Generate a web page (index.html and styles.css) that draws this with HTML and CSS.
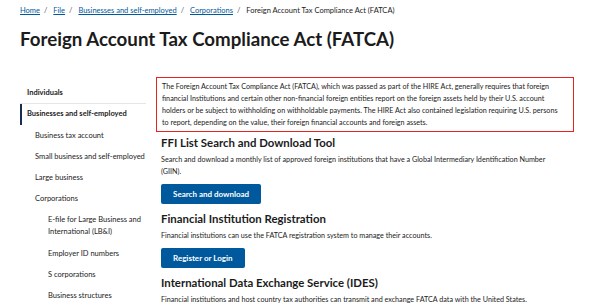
FILE: index.html
```html
<!DOCTYPE html>
<html>
  <head>
    <meta charset="UTF-8" />
    <title>Foreign Account Tax Compliance Act (FATCA)</title>
    <link rel="stylesheet" href="styles.css">
  </head>
  <body>
    <nav class="breadcrumb">
      <a href="#">Home</a><span class="sep">/</span>
      <a href="#">File</a><span class="sep">/</span>
      <a href="#">Businesses and self-employed</a><span class="sep">/</span>
      <a href="#">Corporations</a><span class="sep">/</span>
      <span class="current">Foreign Account Tax Compliance Act (FATCA)</span>
    </nav>
    <h1 class="page-title">Foreign Account Tax Compliance Act (FATCA)</h1>
    <div class="layout">
      <aside class="sidenav">
        <a class="nav-top" href="#">Individuals</a>
        <a class="nav-top active" href="#">Businesses and self-employed</a>
        <a class="nav-sub" href="#">Business tax account</a>
        <a class="nav-sub" href="#">Small business and self-employed</a>
        <a class="nav-sub" href="#">Large business</a>
        <a class="nav-sub" href="#">Corporations</a>
        <a class="nav-subsub" href="#">E-file for Large Business and International (LB&amp;I)</a>
        <a class="nav-subsub" href="#">Employer ID numbers</a>
        <a class="nav-subsub" href="#">S corporations</a>
        <a class="nav-subsub" href="#">Business structures</a>
      </aside>
      <main class="content">
        <p class="intro">The Foreign Account Tax Compliance Act (FATCA), which was passed as part of the HIRE Act, generally requires that foreign financial Institutions and certain other non-financial foreign entities report on the foreign assets held by their U.S. account holders or be subject to withholding on withholdable payments. The HIRE Act also contained legislation requiring U.S. persons to report, depending on the value, their foreign financial accounts and foreign assets.</p>

        <h2>FFI List Search and Download Tool</h2>
        <p>Search and download a monthly list of approved foreign institutions that have a Global Intermediary Identification Number (GIIN).</p>
        <a class="btn" href="#">Search and download</a>

        <h2>Financial Institution Registration</h2>
        <p>Financial institutions can use the FATCA registration system to manage their accounts.</p>
        <a class="btn" href="#">Register or Login</a>

        <h2>International Data Exchange Service (IDES)</h2>
        <p>Financial institutions and host country tax authorities can transmit and exchange FATCA data with the United States.</p>
      </main>
    </div>
  </body>
</html>
```

FILE: styles.css
```css
body {
  font-family: Lato, "Liberation Sans", sans-serif;
  color: #1b1b1b;
  margin: 0;
  padding: 0 20px;
  background: #fff;
  overflow: hidden;
}

.breadcrumb {
  font-size: 7.5px;
  padding-top: 6px;
  height: 12px;
  color: #1b1b1b;
}

.breadcrumb a {
  color: #00599c;
}

.breadcrumb .sep {
  margin: 0 4px;
  color: #555;
}

.page-title {
  font-size: 18.7px;
  font-weight: 700;
  margin: 9px 0 0;
  line-height: 24px;
}

.layout {
  display: flex;
  margin-top: 26px;
}

.sidenav {
  width: 126px;
  flex: none;
  display: flex;
  flex-direction: column;
  margin-right: 10px;
  padding-top: 6px;
}

.sidenav a {
  display: block;
  font-size: 7.5px;
  line-height: 12px;
  color: #1b1b1b;
  text-decoration: none;
}

.nav-top {
  font-weight: 700;
  padding: 4px 0 4px 7px;
  border-bottom: 1px solid #e6e6e6;
}

.nav-top.active {
  border-left: 2px solid #162e51;
  padding: 4px 0 5px 5px;
  border-bottom: none;
}

.nav-sub {
  padding: 4.6px 0 4.6px 15px;
  color: #3d3d3d;
}

.nav-subsub {
  padding: 4.6px 0 4.6px 28px;
  color: #3d3d3d;
}

.content {
  flex: 1;
}

.intro {
  box-sizing: border-box;
  width: 418px;
  margin: 0;
  padding: 2.5px 12px 2.5px 5px;
  border: 1.5px solid #e8231f;
}

.content h2 {
  font-size: 11.4px;
  font-weight: 700;
  margin: 3px 0 0 5px;
  line-height: 16px;
}

.content p {
  font-size: 7.2px;
  line-height: 12px;
}

.content p:not(.intro) {
  max-width: 395px;
  margin: 2.5px 0 3px 5px;
}

.btn {
  display: inline-block;
  margin-left: 5px;
  background: #00599c;
  color: #fff;
  font-size: 8px;
  font-weight: 700;
  text-decoration: none;
  padding: 5px 12px;
  line-height: 10.5px;
  border-radius: 2px;
}

.btn + h2 {
  margin-top: 7px !important;
}
```
